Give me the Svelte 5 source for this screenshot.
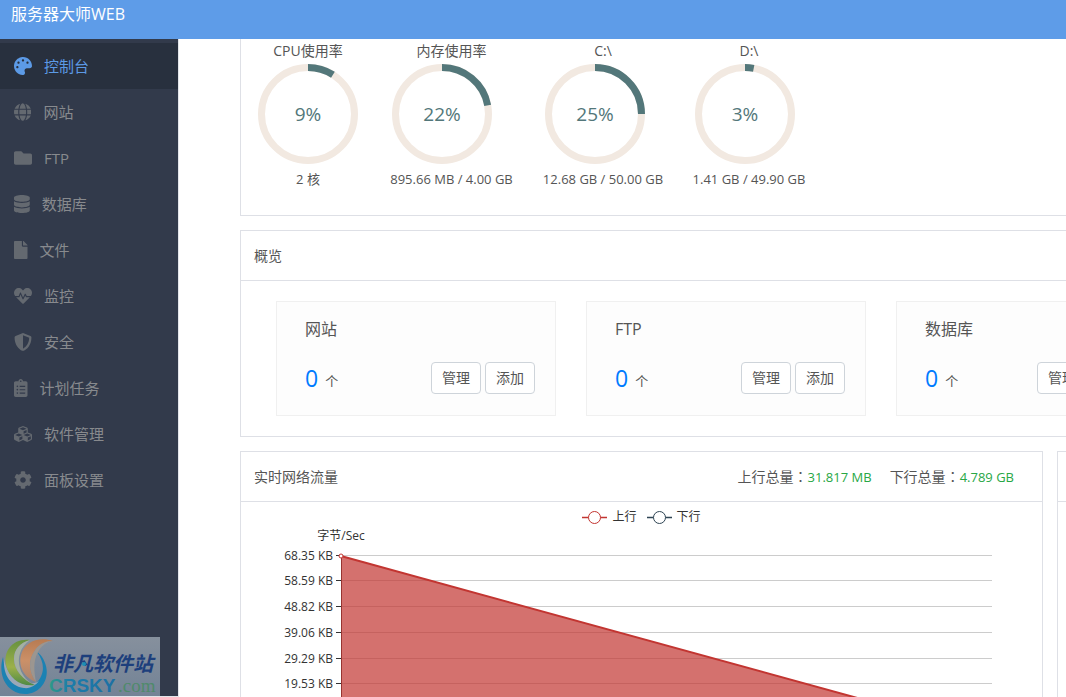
<script lang="ts">
	const nav = [
		{ label: '控制台', w: 512, d: 'M204.3 5C104.9 24.4 24.8 104.3 5.2 203.4c-37 187 131.7 326.4 258.8 306.7 41.2-6.4 61.4-54.6 42.5-91.7-23.1-45.4 9.9-98.4 60.9-98.4h79.7c35.8 0 64.8-29.6 64.9-65.3C511.5 97.1 368.1-26.9 204.3 5zM96 320c-17.7 0-32-14.3-32-32s14.3-32 32-32 32 14.3 32 32-14.3 32-32 32zm32-128c-17.7 0-32-14.3-32-32s14.3-32 32-32 32 14.3 32 32-14.3 32-32 32zm128-64c-17.7 0-32-14.3-32-32s14.3-32 32-32 32 14.3 32 32-14.3 32-32 32zm128 64c-17.7 0-32-14.3-32-32s14.3-32 32-32 32 14.3 32 32-14.3 32-32 32z' },
		{ label: '网站', w: 496, d: 'M336.5 160C322 70.7 287.8 8 248 8s-74 62.7-88.5 152h177zM152 256c0 22.2 1.2 43.5 3.3 64h185.3c2.1-20.5 3.3-41.8 3.3-64s-1.2-43.5-3.3-64H155.3c-2.1 20.5-3.3 41.8-3.3 64zm324.7-96c-28.6-67.9-86.5-120.4-158-141.6 24.4 33.8 41.2 84.7 50 141.6h108zM177.2 18.4C105.8 39.6 47.8 92.1 19.3 160h108c8.7-56.9 25.5-107.8 49.9-141.6zM487.4 192H372.7c2.1 21 3.3 42.5 3.3 64s-1.2 43-3.3 64h114.6c5.5-20.5 8.6-41.8 8.6-64s-3.1-43.5-8.5-64zM120 256c0-21.5 1.2-43 3.3-64H8.6C3.2 212.5 0 233.8 0 256s3.2 43.5 8.6 64h114.6c-2-21-3.2-42.5-3.2-64zm39.5 96c14.5 89.3 48.7 152 88.5 152s74-62.7 88.5-152h-177zm159.3 141.6c71.4-21.2 129.4-73.7 158-141.6h-108c-8.8 56.9-25.6 107.8-50 141.6zM19.3 352c28.6 67.9 86.5 120.4 158 141.6-24.4-33.8-41.2-84.7-50-141.6h-108z' },
		{ label: 'FTP', w: 512, d: 'M464 128H272l-64-64H48C21.49 64 0 85.49 0 112v288c0 26.51 21.49 48 48 48h416c26.51 0 48-21.49 48-48V176c0-26.51-21.49-48-48-48z' },
		{ label: '数据库', w: 448, d: 'M448 73.143v45.714C448 159.143 347.667 192 224 192S0 159.143 0 118.857V73.143C0 32.857 100.333 0 224 0s224 32.857 224 73.143zM448 176v102.857C448 319.143 347.667 352 224 352S0 319.143 0 278.857V176c48.125 33.143 136.208 48.572 224 48.572S399.874 209.143 448 176zm0 160v102.857C448 479.143 347.667 512 224 512S0 479.143 0 438.857V336c48.125 33.143 136.208 48.572 224 48.572S399.874 369.143 448 336z' },
		{ label: '文件', w: 384, d: 'M224 136V0H24C10.7 0 0 10.7 0 24v464c0 13.3 10.7 24 24 24h336c13.3 0 24-10.7 24-24V160H248c-13.2 0-24-10.8-24-24zm160-14.1v6.1H256V0h6.1c6.4 0 12.5 2.5 17 7l97.9 98c4.5 4.5 7 10.6 7 16.9z' },
		{ label: '监控', w: 512, d: 'M320.2 243.8l-49.7 99.4c-6 12.1-23.4 11.7-28.9-.6l-56.9-126.3-30 71.7H60.6l182.5 186.5c7.1 7.3 18.6 7.3 25.7 0L451.4 288H342.3l-22.1-44.2zM473.7 73.9l-2.4-2.5c-51.5-52.6-135.8-52.6-187.4 0L256 100l-27.9-28.5c-51.5-52.7-135.9-52.7-187.4 0l-2.4 2.4C-10.4 123.7-12.5 203 31 256h102.4l35.9-86.2c5.4-12.9 23.6-13.1 29.4-.4l58.2 129.3 49-97.9c5.9-11.8 22.7-11.8 28.6 0l27.6 55.2H481c43.5-53 41.4-132.3-7.3-182.1z' },
		{ label: '安全', w: 512, d: 'M466.5 83.7l-192-80a48.15 48.15 0 0 0-36.9 0l-192 80C27.7 91.1 16 108.6 16 128c0 198.5 114.5 335.7 221.5 380.3 11.8 4.9 25.1 4.9 36.9 0C360.1 472.6 496 349.3 496 128c0-19.4-11.7-36.9-29.5-44.3zM256.1 446.3l-.1-381 175.9 73.3c-3.3 151.4-82.1 261.1-175.8 307.7z' },
		{ label: '计划任务', w: 384, d: 'M336 64h-80c0-35.3-28.7-64-64-64s-64 28.7-64 64H48C21.5 64 0 85.5 0 112v352c0 26.5 21.5 48 48 48h288c26.5 0 48-21.5 48-48V112c0-26.5-21.5-48-48-48zM96 424c-13.3 0-24-10.7-24-24s10.7-24 24-24 24 10.7 24 24-10.7 24-24 24zm0-96c-13.3 0-24-10.7-24-24s10.7-24 24-24 24 10.7 24 24-10.7 24-24 24zm0-96c-13.3 0-24-10.7-24-24s10.7-24 24-24 24 10.7 24 24-10.7 24-24 24zm96-192c13.3 0 24 10.7 24 24s-10.7 24-24 24-24-10.7-24-24 10.7-24 24-24zm128 368c0 4.4-3.6 8-8 8H168c-4.4 0-8-3.6-8-8v-16c0-4.4 3.6-8 8-8h144c4.4 0 8 3.6 8 8v16zm0-96c0 4.4-3.6 8-8 8H168c-4.4 0-8-3.6-8-8v-16c0-4.4 3.6-8 8-8h144c4.4 0 8 3.6 8 8v16zm0-96c0 4.4-3.6 8-8 8H168c-4.4 0-8-3.6-8-8v-16c0-4.4 3.6-8 8-8h144c4.4 0 8 3.6 8 8v16z' },
		{ label: '软件管理', w: 512, d: 'M488.6 250.2L392 214V105.5c0-15-9.3-28.4-23.4-33.7l-100-37.5c-8.1-3.1-17.1-3.1-25.3 0l-100 37.5c-14.1 5.3-23.4 18.7-23.4 33.7V214l-96.6 36.2C9.3 255.5 0 268.9 0 283.9V394c0 13.6 7.7 26.1 19.9 32.2l100 50c10.1 5.1 22.1 5.1 32.2 0l103.9-52 103.9 52c10.1 5.1 22.1 5.1 32.2 0l100-50c12.2-6.1 19.9-18.6 19.9-32.2V283.9c0-15-9.3-28.4-23.4-33.7zM358 214.8l-85 31.9v-68.2l85-37v73.3zM154 104.1l102-38.2 102 38.2v.6l-102 41.4-102-41.4v-.6zm84 291.1l-85 42.5v-79.1l85-38.8v75.4zm0-112l-102 41.4-102-41.4v-.6l102-38.2 102 38.2v.6zm240 112l-85 42.5v-79.1l85-38.8v75.4zm0-112l-102 41.4-102-41.4v-.6l102-38.2 102 38.2v.6z' },
		{ label: '面板设置', w: 512, d: 'M487.4 315.7l-42.6-24.6c4.3-23.2 4.3-47 0-70.2l42.6-24.6c4.9-2.8 7.1-8.6 5.5-14-11.1-35.6-30-67.8-54.7-94.6-3.8-4.1-10-5.1-14.8-2.3L380.8 110c-17.9-15.4-38.5-27.3-60.8-35.1V25.8c0-5.6-3.9-10.5-9.4-11.7-36.7-8.2-74.3-7.8-109.2 0-5.5 1.2-9.4 6.1-9.4 11.7V75c-22.2 7.9-42.8 19.8-60.8 35.1L88.7 85.5c-4.9-2.8-11-1.9-14.8 2.3-24.7 26.7-43.6 58.9-54.7 94.6-1.7 5.4.6 11.2 5.5 14L67.3 221c-4.3 23.2-4.3 47 0 70.2l-42.6 24.6c-4.9 2.8-7.1 8.6-5.5 14 11.1 35.6 30 67.8 54.7 94.6 3.8 4.1 10 5.1 14.8 2.3l42.6-24.6c17.9 15.4 38.5 27.3 60.8 35.1v49.2c0 5.6 3.9 10.5 9.4 11.7 36.7 8.2 74.3 7.8 109.2 0 5.5-1.2 9.4-6.1 9.4-11.7v-49.2c22.2-7.9 42.8-19.8 60.8-35.1l42.6 24.6c4.9 2.8 11 1.9 14.8-2.3 24.7-26.7 43.6-58.9 54.7-94.6 1.5-5.5-.7-11.3-5.6-14.1zM256 336c-44.1 0-80-35.9-80-80s35.9-80 80-80 80 35.9 80 80-35.9 80-80 80z' }
	];

	const gauges = [
		{ title: 'CPU使用率', percent: 9, detail: '2 核' },
		{ title: '内存使用率', percent: 22, detail: '895.66 MB / 4.00 GB' },
		{ title: 'C:\\', percent: 25, detail: '12.68 GB / 50.00 GB' },
		{ title: 'D:\\', percent: 3, detail: '1.41 GB / 49.90 GB' }
	];

	const counters = [
		{ title: '网站', count: 0, action: '添加' },
		{ title: 'FTP', count: 0, action: '添加' },
		{ title: '数据库', count: 0, action: '添加库' }
	];

	const series = [
		{ name: '上行', color: '#c23531' },
		{ name: '下行', color: '#2f4554' }
	];

	// y positions inside the chart svg
	const ticks = [
		{ y: 24, label: '68.35 KB' },
		{ y: 49, label: '58.59 KB' },
		{ y: 75, label: '48.82 KB' },
		{ y: 101, label: '39.06 KB' },
		{ y: 127, label: '29.29 KB' },
		{ y: 152, label: '19.53 KB' },
		{ y: 178, label: '9.76 KB' },
		{ y: 204, label: '0 KB' }
	];

	let active = $state('控制台');
</script>

<svelte:head>
	<title>服务器大师WEB</title>
</svelte:head>

<div class="app">
	<header class="topbar">服务器大师WEB</header>

	<div class="body">
		<nav class="sidebar">
			{#each nav as item}
				<a
					href="#{item.label}"
					class="nav-item"
					class:active={active === item.label}
					onclick={() => (active = item.label)}
				>
					<svg class="nav-icon" viewBox="0 0 {item.w} 512" fill="currentColor" aria-hidden="true">
						<path d={item.d} />
					</svg>
					<span>{item.label}</span>
				</a>
			{/each}
		</nav>

		<main class="main">
			<div class="content">
				<section class="panel status">
					{#each gauges as g}
						<div class="gauge">
							<div class="gauge-title">{g.title}</div>
							<div class="ring">
								<svg width="100" height="100" viewBox="0 0 100 100">
									<circle cx="50" cy="50" r="46.5" fill="none" stroke="#f2e9e1" stroke-width="7" />
									<circle
										cx="50"
										cy="50"
										r="46.5"
										fill="none"
										stroke="#53777a"
										stroke-width="7"
										pathLength="100"
										stroke-dasharray="{g.percent} 100"
										transform="rotate(-90 50 50)"
									/>
								</svg>
								<span class="ring-value">{g.percent}%</span>
							</div>
							<div class="gauge-detail">{g.detail}</div>
						</div>
					{/each}
				</section>

				<section class="panel">
					<h2 class="panel-head">概览</h2>
					<div class="counters">
						{#each counters as c}
							<div class="counter">
								<h3 class="counter-title">{c.title}</h3>
								<div class="counter-row">
									<span class="count">{c.count}</span>
									<span class="unit">个</span>
									<button type="button" class="btn first">管理</button>
									<button type="button" class="btn">{c.action}</button>
								</div>
							</div>
						{/each}
					</div>
				</section>

				<div class="charts">
					<section class="panel">
						<div class="panel-head">
							<h2>实时网络流量</h2>
							<div class="totals">
								<span>上行总量<i>：</i><b>31.817 MB</b></span>
								<span>下行总量<i>：</i><b>4.789 GB</b></span>
							</div>
						</div>
						<div class="legend">
							{#each series as s}
								<span class="legend-item">
									<svg width="25" height="14" viewBox="0 0 25 14" fill="none" stroke={s.color}>
										<path d="M0 7.500h6.500M18.500 7.500H25" stroke-width="1.400" />
										<circle cx="12.500" cy="7.500" r="6" />
									</svg>
									{s.name}
								</span>
							{/each}
						</div>
						<svg class="plot" width="801" height="230" viewBox="0 0 801 230">
							<text x="100" y="9" text-anchor="middle">字节/Sec</text>
							{#each ticks as t}
								<path d="M100 {t.y + 0.5}H751" stroke="#ccc" />
								<path d="M95 {t.y + 0.5}h5" stroke="#333" />
								<text x="92" y={t.y + 5} text-anchor="end">{t.label}</text>
							{/each}
							<path d="M100.500 24V204" stroke="#333" />
							<path d="M100 25L751 204H100z" fill="#c23531" fill-opacity="0.7" />
							<path d="M100 25L751 204" stroke="#c23531" stroke-width="2" />
							<circle cx="100" cy="25" r="2" fill="#fff" stroke="#c23531" />
						</svg>
					</section>

					<section class="panel">
						<div class="panel-head"></div>
					</section>
				</div>
			</div>
		</main>
	</div>

	<svg class="watermark" width="160" height="59" viewBox="0 0 160 59">
		<defs>
			<linearGradient id="wm-bg" x1="0" y1="0" x2="0" y2="1">
				<stop offset="0" stop-color="#86909d" />
				<stop offset="1" stop-color="#738396" />
			</linearGradient>
			<linearGradient id="wm-green" x1="0" y1="0" x2="0" y2="1">
				<stop offset="0" stop-color="#66913e" />
				<stop offset="0.6" stop-color="#9cb04a" />
				<stop offset="1" stop-color="#4f8a45" />
			</linearGradient>
			<linearGradient id="wm-orange" x1="0" y1="0" x2="0" y2="1">
				<stop offset="0" stop-color="#b77b52" />
				<stop offset="0.5" stop-color="#cb9068" />
				<stop offset="1" stop-color="#a98570" />
			</linearGradient>
			<linearGradient id="wm-teal" x1="0" y1="0" x2="1" y2="0">
				<stop offset="0" stop-color="#2f9a86" />
				<stop offset="0.3" stop-color="#1c7dab" />
				<stop offset="1" stop-color="#1c6fa3" />
			</linearGradient>
		</defs>
		<rect width="160" height="59" fill="url(#wm-bg)" />
		<path d="M3 20C-3 40 8 57 25 57C41 57 51 41 45 26C43 20 40 17 37 15C46 27 44 39 36 46C23 56 6 46 3 20z" fill="#1b82b3" />
		<path d="M4 22C3 34 8 49 24 51C30 52 36 48 39 44C30 50 9 48 4 22z" fill="#9aa8b8" />
		<path d="M30 3C13 1 3 14 6 28C9 41 20 50 35 48C23 43 14 33 14 22C14 12 20 6 30 3z" fill="url(#wm-green)" />
		<path d="M14 22C14 12 20 6 30 3C20 10 17 21 20 31C22 39 28 45 35 48C23 43 14 33 14 22z" fill="#a4b0a2" />
		<path d="M53 4C39 -1 24 5 21 18C18 29 24 41 36 45C29 35 28 24 34 15C38 8 44 4 53 4z" fill="url(#wm-orange)" />
		<path d="M53 4C44 4 38 8 34 15C28 24 29 35 36 45C34 34 33 24 38 15C41 9 46 5 53 4z" fill="#9c9690" />
		<text class="wm-cn" x="53" y="34">非凡软件站</text>
		<circle cx="84" cy="27" r="2" fill="#1c8fb5" />
		<text class="wm-en" x="49" y="55" fill="url(#wm-teal)">CRSKY</text>
		<text class="wm-com" x="118" y="55">.com</text>
	</svg>
</div>

<style>
	:global(body) {
		margin: 0;
		overflow: hidden;
	}

	.app {
		height: 100vh;
		display: flex;
		flex-direction: column;
		overflow: hidden;
		background: #fff;
		color: #555;
		font-family: 'Open Sans', 'Noto Sans CJK SC', sans-serif;
		font-size: 14px;
		line-height: 20px;
	}

	.topbar {
		flex: 0 0 39px;
		box-sizing: border-box;
		padding: 4px 11px;
		background: #5e9ce8;
		color: #fff;
		font-size: 16px;
	}

	.body {
		flex: 1;
		min-height: 0;
		display: flex;
	}

	/* Sidebar */
	.sidebar {
		flex: 0 0 178px;
		padding-top: 4px;
		background: #323a4b;
		border-right: 1px solid #e2e5ea;
		border-bottom: 1px solid #e2e5ea;
	}

	.nav-item {
		display: flex;
		align-items: center;
		gap: 12px;
		height: 46px;
		padding-left: 14px;
		color: #888a8e;
		font-size: 15px;
		text-decoration: none;
	}

	.nav-icon {
		height: 18px;
		color: #646970;
	}

	.nav-item.active {
		background: #28303e;
		color: #5c9ae6;
	}

	.nav-item.active .nav-icon {
		color: #5c9ae6;
	}

	/* Panels */
	.main {
		flex: 1;
		min-width: 0;
		overflow: hidden;
		padding-left: 61px;
	}

	.content {
		min-width: 1620px;
		display: flex;
		flex-direction: column;
		gap: 14px;
	}

	.panel {
		border: 1px solid #dee0e6;
		background: #fff;
	}

	.panel-head {
		display: flex;
		align-items: center;
		justify-content: space-between;
		height: 49px;
		margin: 0;
		padding: 0 28px 0 13px;
		border-bottom: 1px solid #dee0e6;
		font-size: 14px;
		font-weight: 400;
	}

	.panel-head h2 {
		margin: 0;
		font-size: 14px;
		font-weight: 400;
	}

	/* Gauges */
	.status {
		display: grid;
		grid-template-columns: 106px 125px 122px 114px;
		gap: 28px;
		padding: 2px 14px 26px;
		border-top: none;
	}

	.gauge {
		text-align: center;
		white-space: nowrap;
	}

	.ring {
		display: grid;
		width: 100px;
		height: 100px;
		padding: 3px;
	}

	.ring svg,
	.ring-value {
		grid-area: 1 / 1;
	}

	.ring-value {
		place-self: center;
		color: #53777a;
		font-size: 19px;
	}

	.gauge-detail {
		margin-top: 2px;
		font-size: 13px;
	}

	/* Counters */
	.counters {
		display: flex;
		gap: 30px;
		padding: 20px 35px;
	}

	.counter {
		box-sizing: border-box;
		width: 280px;
		padding: 15px 20px 21px 28px;
		border: 1px solid #f0f0f0;
		background: #fdfdfd;
	}

	.counter-title {
		margin: 0 0 21px;
		font-size: 16px;
		font-weight: 400;
		line-height: 24px;
	}

	.counter-row {
		display: flex;
		align-items: center;
		gap: 4px;
	}

	.count {
		color: #007bff;
		font-size: 23px;
	}

	.unit {
		padding: 5px 0 0 3px;
		font-size: 13px;
	}

	.btn {
		height: 32px;
		padding: 0 10px;
		border: 1px solid #ced4da;
		border-radius: 4px;
		background: #fff;
		color: #555;
		font: inherit;
		cursor: pointer;
	}

	.btn.first {
		margin-left: auto;
	}

	/* Traffic chart */
	.charts {
		display: grid;
		grid-template-columns: 1fr 1fr;
		gap: 14px;
	}

	.totals {
		display: flex;
		gap: 18px;
	}

	.totals b {
		color: #28a745;
		font-size: 13px;
		font-weight: 400;
	}

	/* centred full-width colon */
	.totals i {
		font-family: 'Noto Sans CJK TC', sans-serif;
		font-style: normal;
	}

	.legend {
		display: flex;
		justify-content: center;
		gap: 10px;
		padding-top: 5px;
		color: #333;
		font-size: 12px;
	}

	.legend-item {
		display: flex;
		align-items: center;
		gap: 5px;
	}

	.plot {
		display: block;
		margin-top: 4px;
		overflow: visible;
		font-size: 12px;
	}

	.plot text {
		fill: #333;
	}

	/* Site mark pinned over the sidebar */
	.watermark {
		position: absolute;
		left: 0;
		bottom: 1px;
	}

	.wm-cn {
		fill: #1d3f7c;
		font-family: 'Noto Sans CJK SC', sans-serif;
		font-size: 20px;
		font-style: italic;
		font-weight: 700;
	}

	.wm-en {
		font-family: 'Liberation Sans', sans-serif;
		font-size: 19px;
		font-weight: 700;
	}

	.wm-com {
		fill: #4f8a6b;
		font-family: 'Liberation Serif', serif;
		font-size: 19px;
	}
</style>
